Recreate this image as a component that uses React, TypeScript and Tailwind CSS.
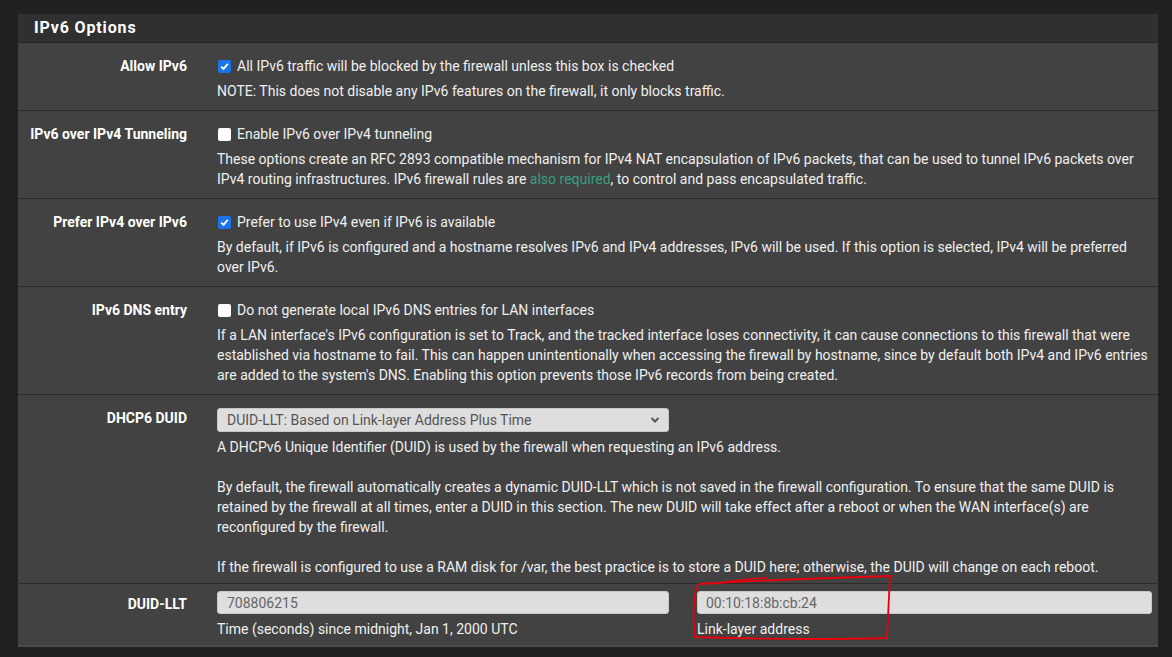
import React from "react";

const Check = ({ checked }: { checked: boolean }) =>
  checked ? (
    <span className="inline-flex w-[13px] h-[13px] ml-[1px] rounded-[2px] bg-[#1a73e8] items-center justify-center shrink-0">
      <svg width="11" height="11" viewBox="0 0 11 11">
        <path d="M2.2 5.6 L4.5 7.9 L8.8 2.8" stroke="#fff" strokeWidth="1.9" fill="none" />
      </svg>
    </span>
  ) : (
    <span className="inline-block w-[13px] h-[13px] ml-[1px] rounded-[2px] bg-white shrink-0" />
  );

const Row = ({
  label,
  children,
  first,
  pt = "pt-[13px]",
  pb = "pb-[9px]",
  lpt = "",
}: {
  label: string;
  children: React.ReactNode;
  first?: boolean;
  pt?: string;
  pb?: string;
  lpt?: string;
}) => (
  <div className={`flex ${first ? "" : "border-t border-[#2b2b2b]"}`}>
    <div className={`w-[184px] shrink-0 pr-[15px] text-right font-bold text-white ${pt} ${lpt}`}>{label}</div>
    <div className={`flex-1 pl-[15px] pr-[6px] ${pt} ${pb}`}>{children}</div>
  </div>
);

const CheckLine = ({ checked, text }: { checked: boolean; text: string }) => (
  <div className="flex items-center gap-[6px] mb-[5px]">
    <Check checked={checked} />
    <span>{text}</span>
  </div>
);

export default function App() {
  return (
    <div className="relative min-h-[657px] bg-[#212121] pt-[13px] pl-[18px] pr-[14px] font-['Roboto',sans-serif] text-[14px] leading-[20px] text-[#f0f0f0]">
      <div className="bg-[#424242] border-b-2 border-[#4a4a4a]">
        <div className="h-[30px] bg-[#303030] border-t border-[#3c3c3c] border-b border-[#232323] flex items-center pl-[16px] text-[16px] font-bold tracking-[0.85px] text-white">
          IPv6 Options
        </div>

        <Row label="Allow IPv6" first>
          <CheckLine checked text="All IPv6 traffic will be blocked by the firewall unless this box is checked" />
          <div>NOTE: This does not disable any IPv6 features on the firewall, it only blocks traffic.</div>
        </Row>

        <Row label="IPv6 over IPv4 Tunneling">
          <CheckLine checked={false} text="Enable IPv6 over IPv4 tunneling" />
          <p>
            These options create an RFC 2893 compatible mechanism for IPv4 NAT encapsulation of IPv6 packets, that can be used to tunnel IPv6 packets over IPv4 routing infrastructures. IPv6 firewall rules are{" "}
            <a className="text-[#3a9e82]">also required</a>, to control and pass encapsulated traffic.
          </p>
        </Row>

        <Row label="Prefer IPv4 over IPv6">
          <CheckLine checked text="Prefer to use IPv4 even if IPv6 is available" />
          <div>
            By default, if IPv6 is configured and a hostname resolves IPv6 and IPv4 addresses, IPv6 will be used. If this option is selected, IPv4 will be preferred over IPv6.
          </div>
        </Row>

        <Row label="IPv6 DNS entry">
          <CheckLine checked={false} text="Do not generate local IPv6 DNS entries for LAN interfaces" />
          <div>
            If a LAN interface's IPv6 configuration is set to Track, and the tracked interface loses connectivity, it can cause connections to this firewall that were established via hostname to fail. This can happen unintentionally when accessing the firewall by hostname, since by default both IPv4 and IPv6 entries are added to the system's DNS. Enabling this option prevents those IPv6 records from being created.
          </div>
        </Row>

        <Row label="DHCP6 DUID" pb="pb-[6px]">
          <div className="w-[452px] h-[24px] mb-[5px] rounded-[3px] bg-[#dedede] border border-[#c8c8c8] flex items-center justify-between pl-[9px] pr-[8px] text-[#555]">
            <span>DUID-LLT: Based on Link-layer Address Plus Time</span>
            <svg width="10" height="8" viewBox="0 0 10 8">
              <path d="M1.5 2 L5 5.5 L8.5 2" stroke="#555" strokeWidth="2" fill="none" />
            </svg>
          </div>
          <div>A DHCPv6 Unique Identifier (DUID) is used by the firewall when requesting an IPv6 address.</div>
          <div className="h-[20px]" />
          <div>
            By default, the firewall automatically creates a dynamic DUID-LLT which is not saved in the firewall configuration. To ensure that the same DUID is retained by the firewall at all times, enter a DUID in this section. The new DUID will take effect after a reboot or when the WAN interface(s) are reconfigured by the firewall.
          </div>
          <div className="h-[20px]" />
          <div>If the firewall is configured to use a RAM disk for /var, the best practice is to store a DUID here; otherwise, the DUID will change on each reboot.</div>
        </Row>

        <Row label="DUID-LLT" pt="pt-[7px]" pb="pb-[6px]" lpt="!pt-[10px]">
          <div className="flex gap-[28px]">
            <div className="w-[452px]">
              <div className="h-[23px] mb-[5px] rounded-[3px] bg-[#dedede] border border-[#c8c8c8] flex items-center pl-[9px] text-[#666]">708806215</div>
              <div>Time (seconds) since midnight, Jan 1, 2000 UTC</div>
            </div>
            <div className="flex-1">
              <div className="h-[23px] mb-[5px] rounded-[3px] bg-[#dedede] border border-[#c8c8c8] flex items-center pl-[8px] text-[#666]">00:10:18:8b:cb:24</div>
              <div>Link-layer address</div>
            </div>
          </div>
        </Row>
      </div>

      <svg className="absolute left-0 top-0 pointer-events-none" width="1172" height="657" viewBox="0 0 1172 657">
        <path
          d="M699 584 C 760 580, 830 578, 890 576 C 889 600, 888 620, 887 638 C 820 640, 760 639, 695 637 C 693 620, 692 600, 698 584"
          stroke="#e8000b"
          strokeWidth="1.8"
          fill="none"
        />
        <path d="M712 584 C 740 580, 760 578, 767 578" stroke="#e8000b" strokeWidth="1.6" fill="none" />
      </svg>
    </div>
  );
}
